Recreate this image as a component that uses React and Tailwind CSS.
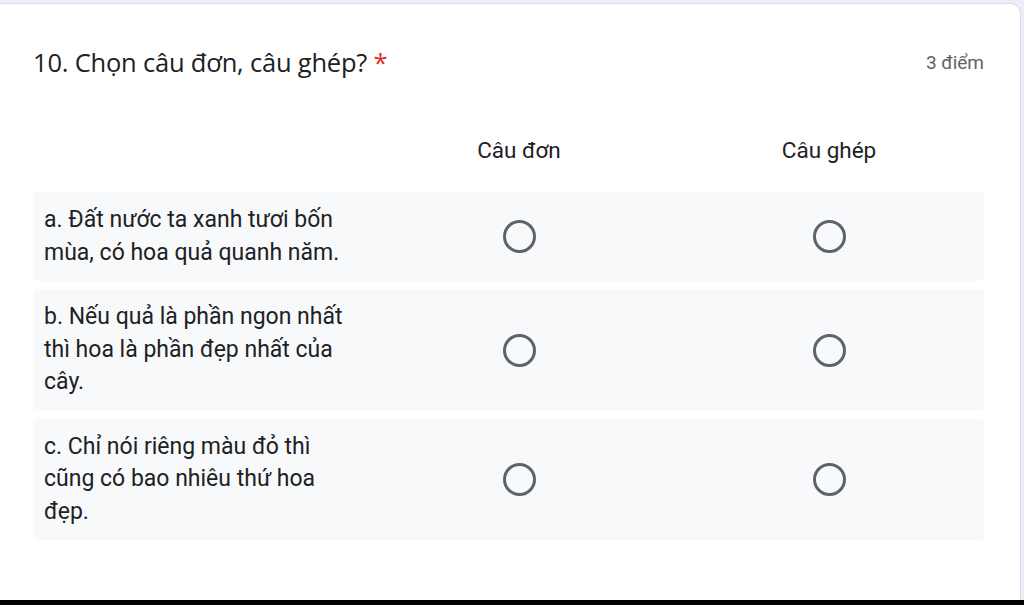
export default function App() {
  const rows = [
    { text: "a. Đất nước ta xanh tươi bốn mùa, có hoa quả quanh năm.", h: "h-[89px]" },
    { text: "b. Nếu quả là phần ngon nhất thì hoa là phần đẹp nhất của cây.", h: "h-[122px]" },
    { text: "c. Chỉ nói riêng màu đỏ thì cũng có bao nhiêu thứ hoa đẹp.", h: "h-[121px]" },
  ];
  return (
    <div className="w-[1024px] h-[605px] bg-[#f0ebf8] flex flex-col overflow-hidden">
      <div className="flex-1 mt-[3px] mr-[3px] bg-white rounded-tr-[10px] border-t border-r border-[#dadce0] pl-[33px] pr-[36px] pt-[38px]">
        <div className="flex items-center justify-between h-[40px]">
          <div className="text-[25.5px] leading-[40px] text-[#202124] font-['Open_Sans',sans-serif] tracking-[-0.2px]">
            10. Chọn câu đơn, câu ghép? <span className="text-[#d93025]">*</span>
          </div>
          <div className="text-[19px] leading-[40px] text-[#5f6368] font-['Roboto',sans-serif] pt-[2px]">3 điểm</div>
        </div>
        <div className="font-['Roboto',sans-serif] text-[#202124]">
          <div className="flex mt-[50px] h-[60px] text-[22.5px] leading-[36px] items-start">
            <div className="w-[331px]" />
            <div className="w-[310px] text-center">Câu đơn</div>
            <div className="w-[310px] text-center">Câu ghép</div>
          </div>
          <div className="flex flex-col gap-[8px]">
            {rows.map((r, i) => (
              <div key={i} className={`flex items-center bg-[#f8f9fa] rounded-[4px] ${r.h}`}>
                <div className="w-[331px] pl-[11px] pr-[6px] text-[23px] leading-[32.5px]">{r.text}</div>
                <div className="w-[310px] flex justify-center">
                  <div className="w-[33px] h-[33px] rounded-full border-[3px] border-[#5f6368]" />
                </div>
                <div className="w-[310px] flex justify-center">
                  <div className="w-[33px] h-[33px] rounded-full border-[3px] border-[#5f6368]" />
                </div>
              </div>
            ))}
          </div>
        </div>
      </div>
      <div className="h-[5px] bg-black" />
    </div>
  );
}
